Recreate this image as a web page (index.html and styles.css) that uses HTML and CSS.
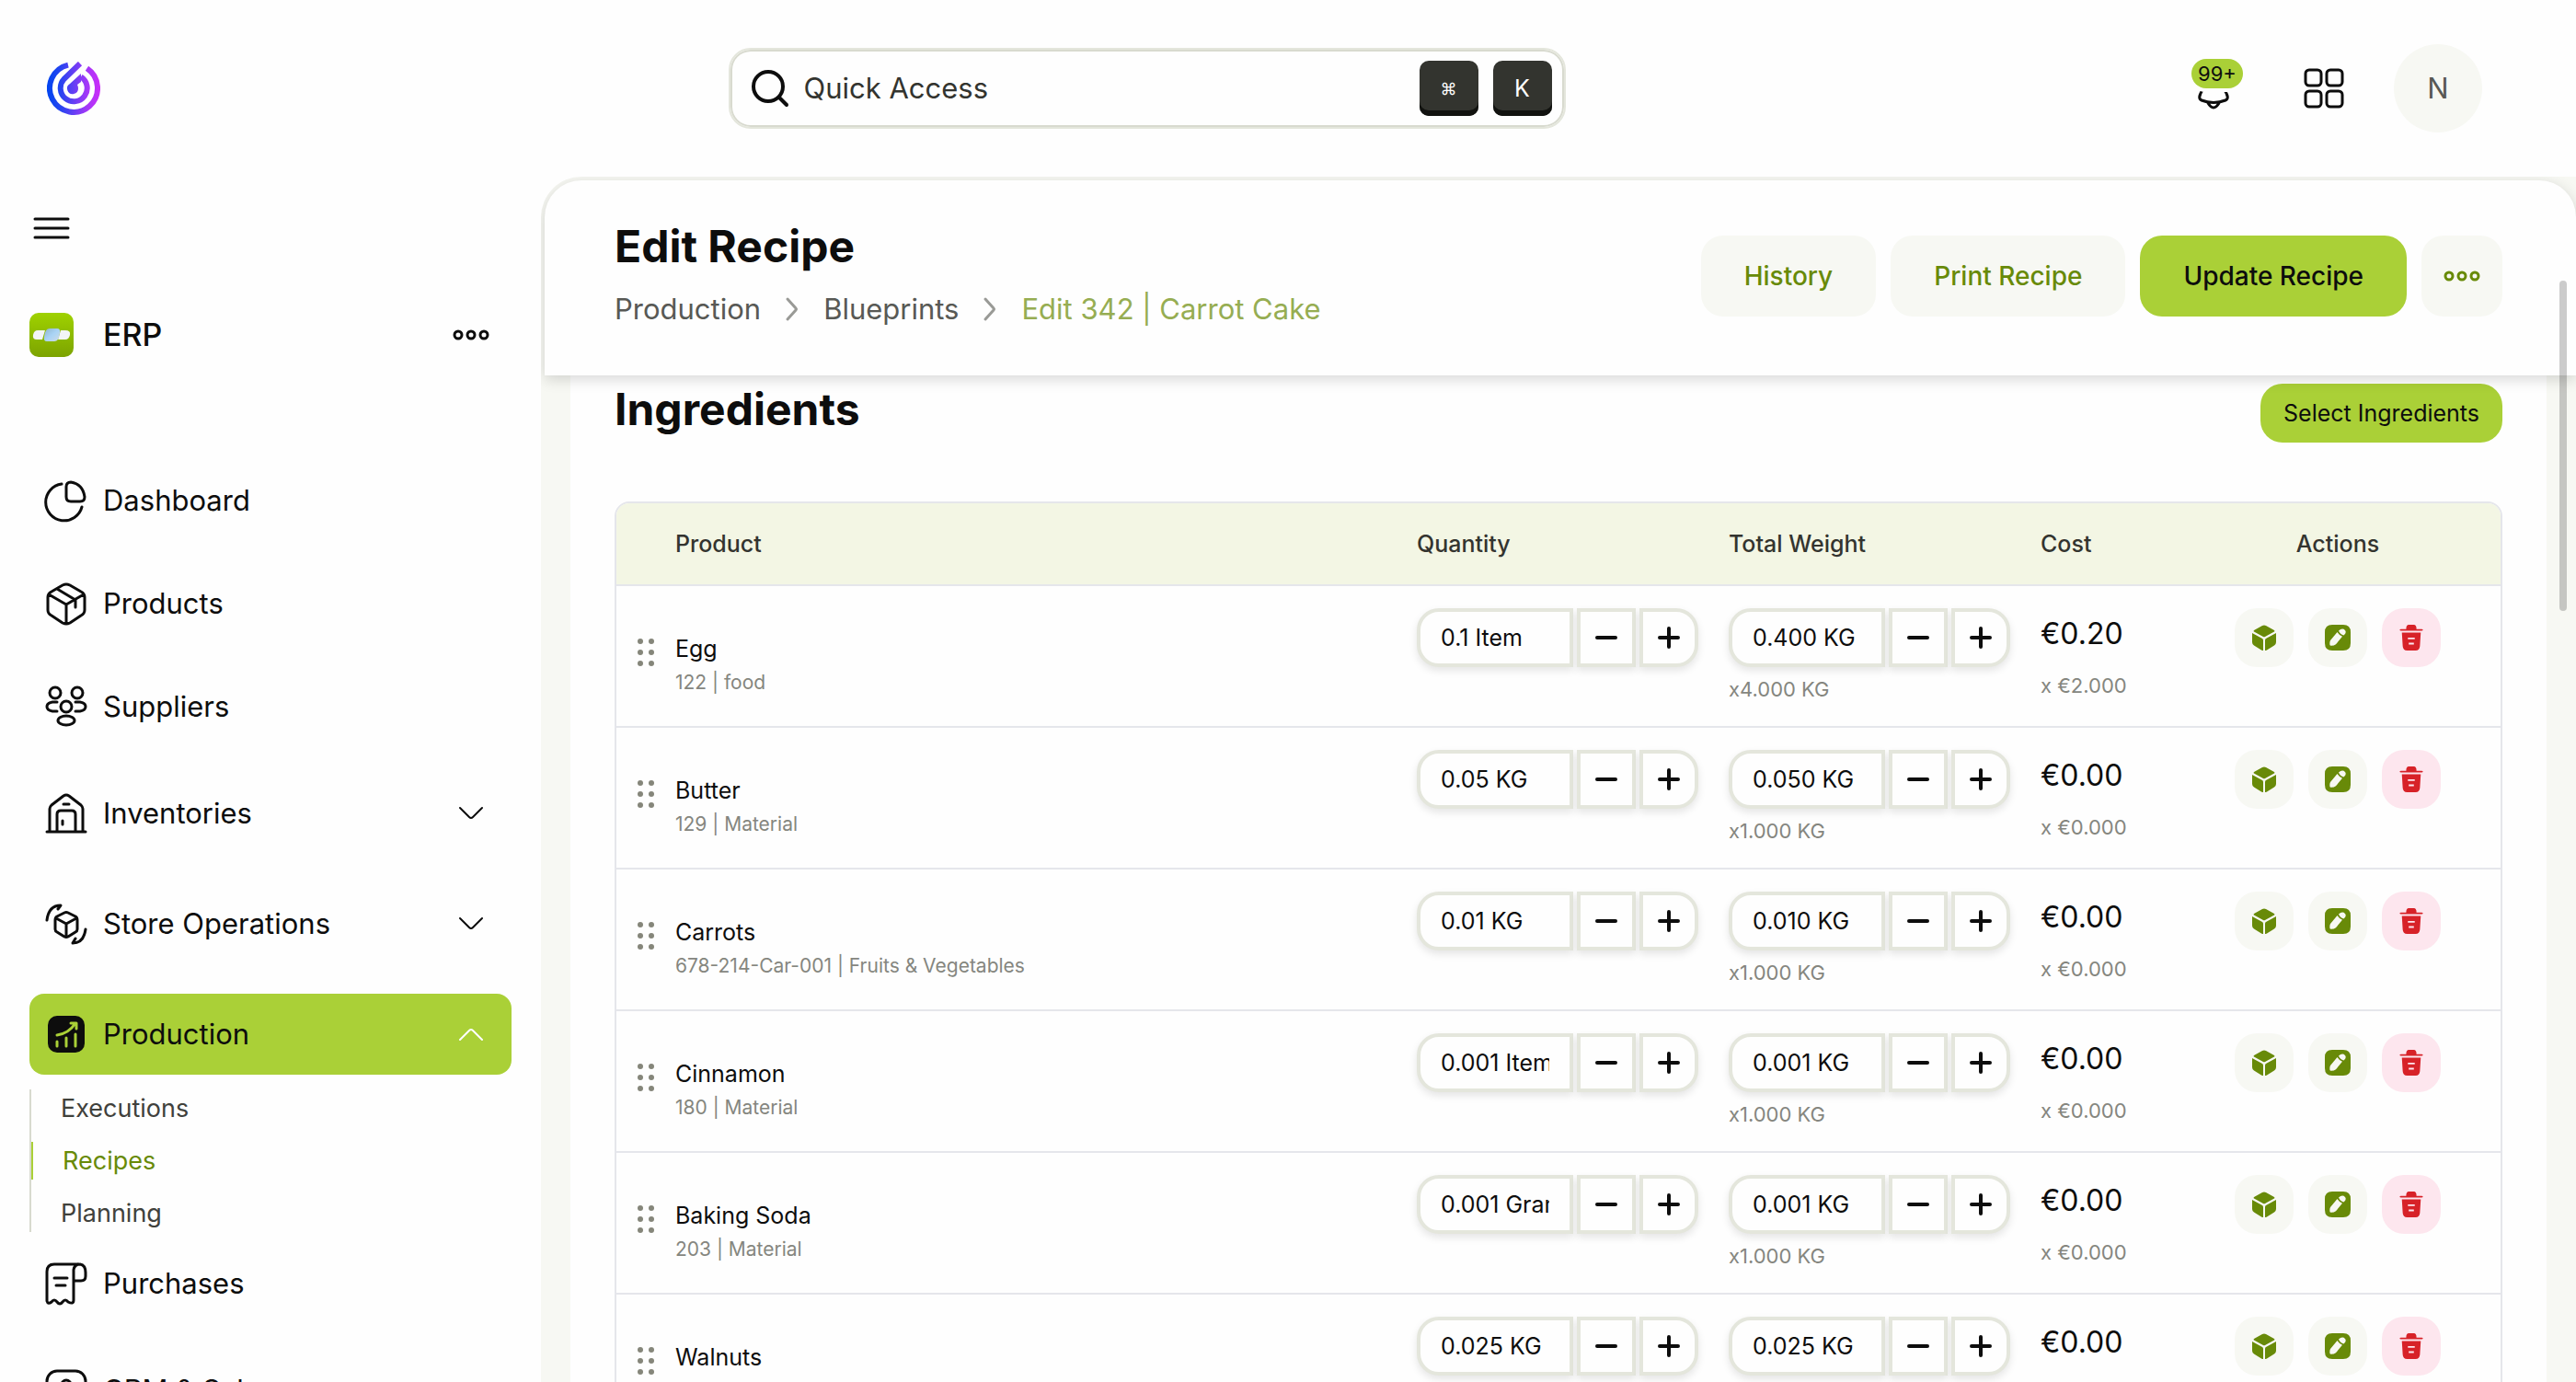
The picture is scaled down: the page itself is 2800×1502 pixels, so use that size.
FILE: index.html
```
<!DOCTYPE html>
<html lang="en">
<head>
    <meta charset="UTF-8">
    <meta name="viewport" content="width=device-width, initial-scale=1.0">
    <title>Edit Recipe</title>
    <link rel="stylesheet" href="styles.css">
</head>
<body>

    <!-- Shared icons -->
    <svg class="sprite" aria-hidden="true">
        <symbol id="i-chevron" viewBox="0 0 28 16"><path d="M2 2l10 10q2 2 4 0L26 2"/></symbol>
        <symbol id="i-crumb" viewBox="0 0 16 28"><path d="M3 3l9 10q1 1 0 2L3 25"/></symbol>
        <symbol id="i-more" viewBox="0 0 40 14"><circle cx="6" cy="7" r="4"/><circle cx="20" cy="7" r="4"/><circle cx="34" cy="7" r="4"/></symbol>
        <symbol id="i-drag" viewBox="0 0 18 30"><circle cx="3" cy="3" r="3"/><circle cx="15" cy="3" r="3"/><circle cx="3" cy="15" r="3"/><circle cx="15" cy="15" r="3"/><circle cx="3" cy="27" r="3"/><circle cx="15" cy="27" r="3"/></symbol>
        <symbol id="i-minus" viewBox="0 0 24 24"><path d="M2 12h20"/></symbol>
        <symbol id="i-plus" viewBox="0 0 24 24"><path d="M2 12h20M12 2v20"/></symbol>
        <symbol id="i-box" viewBox="0 0 28 28"><path d="M12 1q2-1 4 0l9 5q1 1 0 1.500L15 13q-1 .5-2 0L3 7.500Q2 7 3 6zM1 9l11 6q1 .5 1 2v11q-1 0-2-.5l-8-5Q1 21 1 19zM27 9l-11 6q-1 .5-1 2v11q1 0 2-.5l8-5q2-1.500 2-3.500z"/></symbol>
        <symbol id="i-edit" viewBox="0 0 28 28"><path fill-rule="evenodd" d="M8 0h12q8 0 8 8v12q0 8-8 8H8q-8 0-8-8V8q0-8 8-8zM13.500 8L6 17q-1 2-.5 5 .2 1 1.500.8 3 0 5-1.500l7-8.500q-3-1-5.500-4.800zM15 6.500q1.500 4 5.500 5 3.500-3 1.500-5.500-3-3-7 .5z"/></symbol>
        <symbol id="i-trash" viewBox="0 0 28 30"><path fill-rule="evenodd" d="M8 5q0-5 3-5h6q3 0 3 5h6q1.500 0 1.500 1T26 7H2Q.5 7 .5 6T2 5zM3 9h22l-1 16q-.3 5-5 5H9q-4.700 0-5-5zM10 15v2h8v-2zM11 21v2h6v-2z"/></symbol>
    </svg>

    <div class="app">

        <!-- Top bar -->
        <header class="topbar">
            <a href="#" class="logo" aria-label="Home">
                <svg viewBox="0 0 58 58">
                    <defs>
                        <linearGradient id="logoFill" x1="0" y1="0" x2="58" y2="0" gradientUnits="userSpaceOnUse">
                            <stop offset="0" stop-color="#0045f0"/>
                            <stop offset=".25" stop-color="#2544f0"/>
                            <stop offset=".75" stop-color="#a338f8"/>
                            <stop offset="1" stop-color="#cc2cf8"/>
                        </linearGradient>
                    </defs>
                    <g fill="none" stroke="url(#logoFill)" stroke-width="6">
                        <path d="M23 3.600A26 26 0 1 0 43.500 7.300"/>
                        <path d="M36 2L18.500 19A14.500 14.500 0 1 0 37 16.500"/>
                    </g>
                    <path fill="url(#logoFill)" d="M37 13l-12 11a6 6 0 1 0 9 5q0-2-1-4l4-3z"/>
                </svg>
            </a>
            <label class="search">
                <svg class="search-icon" viewBox="0 0 42 42"><circle cx="19" cy="19" r="16"/><path d="M31 31l8 8"/></svg>
                <input type="text" placeholder="Quick Access" aria-label="Quick Access">
                <kbd class="key key-cmd">⌘</kbd>
                <kbd class="key">K</kbd>
            </label>
            <div class="topbar-actions">
                <button class="bell" aria-label="Notifications">
                    <svg viewBox="0 0 44 48"><path d="M10 26q-6 9-1 11 13 5 26 0 5-2-1-11M16 40q6 10 12 0"/></svg>
                    <span class="badge">99+</span>
                </button>
                <button class="apps" aria-label="Apps">
                    <svg viewBox="0 0 44 44"><rect x="2" y="2" width="17" height="17" rx="4"/><rect x="25" y="2" width="17" height="17" rx="4"/><rect x="2" y="25" width="17" height="17" rx="4"/><rect x="25" y="25" width="17" height="17" rx="4"/></svg>
                </button>
                <button class="avatar">N</button>
            </div>
        </header>

        <div class="body">

            <!-- Sidebar -->
            <aside class="sidebar">
                <button class="menu-toggle" aria-label="Toggle menu">
                    <svg viewBox="0 0 40 24"><path d="M2 2h36M2 12h36M2 22h36"/></svg>
                </button>
                <div class="workspace">
                    <svg class="workspace-icon" viewBox="0 0 48 48">
                        <defs>
                            <linearGradient id="erpFill" x1="0" y1="0" x2="0" y2="1"><stop offset="0" stop-color="#9fd200"/><stop offset="1" stop-color="#7ca300"/></linearGradient>
                            <linearGradient id="erpBlue" x1="0" y1="0" x2="1" y2="1"><stop offset="0" stop-color="#8fb4cc"/><stop offset=".5" stop-color="#a9d3f5"/><stop offset="1" stop-color="#cfdbe6"/></linearGradient>
                        </defs>
                        <rect width="48" height="48" rx="10" fill="url(#erpFill)"/>
                        <path fill="#f3f5f6" d="M9 19h8l-3 10H8q-5 0-4-5 1-5 5-5zM34 19h5q6 0 5 5-1 5-5 5h-8z"/>
                        <path fill="url(#erpBlue)" d="M22 17h8q4 0 3 5-1 9-6 9h-8q-4 0-3-5 1-9 6-9z"/>
                    </svg>
                    <span class="workspace-name">ERP</span>
                    <button class="workspace-more" aria-label="More"><svg class="more"><use href="#i-more"/></svg></button>
                </div>
                <nav class="nav">
                    <a href="#" class="nav-item">
                        <svg class="nav-icon" viewBox="0 0 48 48"><path d="M19 6A20 20 0 1 0 41 31"/><path d="M24 9q0-5 5-5 13 2 15 16 0 5-5 5H29q-5 0-5-5z"/></svg>
                        <span>Dashboard</span>
                    </a>
                    <a href="#" class="nav-item">
                        <svg class="nav-icon" viewBox="0 0 48 48"><path d="M20 4q4-2 8 0l12 7q4 2 4 6v14q0 4-4 6l-12 8q-4 2-8 0L8 37q-4-2-4-6V17q0-4 4-6zM5 14l19 11 19-11M24 25v21M14 8l20 12v8"/></svg>
                        <span>Products</span>
                    </a>
                    <a href="#" class="nav-item">
                        <svg class="nav-icon" viewBox="0 0 48 48"><circle cx="12" cy="9" r="6"/><circle cx="36" cy="9" r="6"/><circle cx="24" cy="24" r="6"/><ellipse cx="24" cy="39" rx="9" ry="5"/><path d="M14 19H9q-6 1-6 5t6 5h5M34 19h5q6 1 6 5t-6 5h-5"/></svg>
                        <span>Suppliers</span>
                    </a>
                    <a href="#" class="nav-item nav-group">
                        <svg class="nav-icon" viewBox="0 0 48 48"><path d="M3 44h42M6 44V19q0-2 2-4L21 5q3-2 6 0l13 10q2 2 2 4v25M14 44V25q0-4 4-4h12q4 0 4 4v19M21 14h6M20 32v4"/></svg>
                        <span>Inventories</span>
                        <svg class="chevron"><use href="#i-chevron"/></svg>
                    </a>
                    <a href="#" class="nav-item nav-group">
                        <svg class="nav-icon" viewBox="0 0 48 48"><path d="M22 12q2-1 4 0l8 4q2 1 2 4v10q0 2-2 3l-8 5q-2 1-4 0l-8-5q-2-1-2-3V20q0-3 2-4zM13 18l11 6 11-6M24 24v14M3 20Q5 4 18 4l-3 4M45 30q-2 15-14 15l3-5"/></svg>
                        <span>Store Operations</span>
                        <svg class="chevron"><use href="#i-chevron"/></svg>
                    </a>
                    <a href="#" class="nav-item nav-group active">
                        <svg class="nav-icon" viewBox="0 0 48 48"><rect class="solid" x="4" y="4" width="40" height="40" rx="10"/><path class="cut" d="M14 25q13-2 20-13M29 12h6v6M14 32v5M24 28v9M34 24v13"/></svg>
                        <span>Production</span>
                        <svg class="chevron up"><use href="#i-chevron"/></svg>
                    </a>
                    <ul class="subnav">
                        <li><a href="#">Executions</a></li>
                        <li class="current"><a href="#">Recipes</a></li>
                        <li><a href="#">Planning</a></li>
                    </ul>
                    <a href="#" class="nav-item">
                        <svg class="nav-icon" viewBox="0 0 48 48"><path d="M37 3H11q-8 0-8 8v32q1 4 5 1 3-4 6 0 3 4 6 0 3-4 6 0 6 3 6-2V9q1-6 7-6 6 1 6 9v4q0 5-5 5h-7M11 18h14M13 26h10"/></svg>
                        <span>Purchases</span>
                    </a>
                    <a href="#" class="nav-item nav-group">
                        <svg class="nav-icon" viewBox="0 0 48 48"><rect x="3" y="3" width="42" height="42" rx="11"/><circle cx="24" cy="18" r="5"/></svg>
                        <span>CRM &amp; Sales</span>
                    </a>
                </nav>
            </aside>

            <!-- Page -->
            <main class="page">
                <div class="page-header">
                    <div class="page-title">
                        <h1>Edit Recipe</h1>
                        <nav class="breadcrumb" aria-label="Breadcrumb">
                            <a href="#">Production</a>
                            <svg><use href="#i-crumb"/></svg>
                            <a href="#">Blueprints</a>
                            <svg><use href="#i-crumb"/></svg>
                            <a href="#" class="here">Edit 342 | Carrot Cake</a>
                        </nav>
                    </div>
                    <div class="page-actions">
                        <button class="btn">History</button>
                        <button class="btn">Print Recipe</button>
                        <button class="btn btn-primary">Update Recipe</button>
                        <button class="btn btn-square" aria-label="More actions"><svg class="more"><use href="#i-more"/></svg></button>
                    </div>
                </div>

                <section class="card">
                    <div class="card-head">
                        <h2>Ingredients</h2>
                        <button class="btn-small">Select Ingredients</button>
                    </div>

                    <table class="ingredients">
                        <colgroup>
                            <col class="col-drag">
                            <col>
                            <col class="col-stepper">
                            <col class="col-stepper">
                            <col class="col-cost">
                            <col class="col-actions">
                        </colgroup>
                        <thead>
                            <tr>
                                <th></th>
                                <th>Product</th>
                                <th>Quantity</th>
                                <th>Total Weight</th>
                                <th>Cost</th>
                                <th class="center">Actions</th>
                            </tr>
                        </thead>
                        <tbody>
                            <tr>
                                <td class="drag"><svg><use href="#i-drag"/></svg></td>
                                <td class="product"><b>Egg</b><small>122 | food</small></td>
                                <td><div class="stepper"><input type="text" value="0.1 Item" aria-label="Quantity"><button aria-label="Less"><svg><use href="#i-minus"/></svg></button><button aria-label="More"><svg><use href="#i-plus"/></svg></button></div></td>
                                <td><div class="stepper"><input type="text" value="0.400 KG" aria-label="Total weight"><button aria-label="Less"><svg><use href="#i-minus"/></svg></button><button aria-label="More"><svg><use href="#i-plus"/></svg></button></div><small>x4.000 KG</small></td>
                                <td class="cost"><span>€0.20</span><small>x €2.000</small></td>
                                <td><div class="actions"><button aria-label="Stock"><svg><use href="#i-box"/></svg></button><button aria-label="Edit"><svg><use href="#i-edit"/></svg></button><button class="delete" aria-label="Delete"><svg><use href="#i-trash"/></svg></button></div></td>
                            </tr>
                            <tr>
                                <td class="drag"><svg><use href="#i-drag"/></svg></td>
                                <td class="product"><b>Butter</b><small>129 | Material</small></td>
                                <td><div class="stepper"><input type="text" value="0.05 KG" aria-label="Quantity"><button aria-label="Less"><svg><use href="#i-minus"/></svg></button><button aria-label="More"><svg><use href="#i-plus"/></svg></button></div></td>
                                <td><div class="stepper"><input type="text" value="0.050 KG" aria-label="Total weight"><button aria-label="Less"><svg><use href="#i-minus"/></svg></button><button aria-label="More"><svg><use href="#i-plus"/></svg></button></div><small>x1.000 KG</small></td>
                                <td class="cost"><span>€0.00</span><small>x €0.000</small></td>
                                <td><div class="actions"><button aria-label="Stock"><svg><use href="#i-box"/></svg></button><button aria-label="Edit"><svg><use href="#i-edit"/></svg></button><button class="delete" aria-label="Delete"><svg><use href="#i-trash"/></svg></button></div></td>
                            </tr>
                            <tr>
                                <td class="drag"><svg><use href="#i-drag"/></svg></td>
                                <td class="product"><b>Carrots</b><small>678-214-Car-001 | Fruits &amp; Vegetables</small></td>
                                <td><div class="stepper"><input type="text" value="0.01 KG" aria-label="Quantity"><button aria-label="Less"><svg><use href="#i-minus"/></svg></button><button aria-label="More"><svg><use href="#i-plus"/></svg></button></div></td>
                                <td><div class="stepper"><input type="text" value="0.010 KG" aria-label="Total weight"><button aria-label="Less"><svg><use href="#i-minus"/></svg></button><button aria-label="More"><svg><use href="#i-plus"/></svg></button></div><small>x1.000 KG</small></td>
                                <td class="cost"><span>€0.00</span><small>x €0.000</small></td>
                                <td><div class="actions"><button aria-label="Stock"><svg><use href="#i-box"/></svg></button><button aria-label="Edit"><svg><use href="#i-edit"/></svg></button><button class="delete" aria-label="Delete"><svg><use href="#i-trash"/></svg></button></div></td>
                            </tr>
                            <tr>
                                <td class="drag"><svg><use href="#i-drag"/></svg></td>
                                <td class="product"><b>Cinnamon</b><small>180 | Material</small></td>
                                <td><div class="stepper"><input type="text" value="0.001 Item" aria-label="Quantity"><button aria-label="Less"><svg><use href="#i-minus"/></svg></button><button aria-label="More"><svg><use href="#i-plus"/></svg></button></div></td>
                                <td><div class="stepper"><input type="text" value="0.001 KG" aria-label="Total weight"><button aria-label="Less"><svg><use href="#i-minus"/></svg></button><button aria-label="More"><svg><use href="#i-plus"/></svg></button></div><small>x1.000 KG</small></td>
                                <td class="cost"><span>€0.00</span><small>x €0.000</small></td>
                                <td><div class="actions"><button aria-label="Stock"><svg><use href="#i-box"/></svg></button><button aria-label="Edit"><svg><use href="#i-edit"/></svg></button><button class="delete" aria-label="Delete"><svg><use href="#i-trash"/></svg></button></div></td>
                            </tr>
                            <tr>
                                <td class="drag"><svg><use href="#i-drag"/></svg></td>
                                <td class="product"><b>Baking Soda</b><small>203 | Material</small></td>
                                <td><div class="stepper"><input type="text" value="0.001 Gram" aria-label="Quantity"><button aria-label="Less"><svg><use href="#i-minus"/></svg></button><button aria-label="More"><svg><use href="#i-plus"/></svg></button></div></td>
                                <td><div class="stepper"><input type="text" value="0.001 KG" aria-label="Total weight"><button aria-label="Less"><svg><use href="#i-minus"/></svg></button><button aria-label="More"><svg><use href="#i-plus"/></svg></button></div><small>x1.000 KG</small></td>
                                <td class="cost"><span>€0.00</span><small>x €0.000</small></td>
                                <td><div class="actions"><button aria-label="Stock"><svg><use href="#i-box"/></svg></button><button aria-label="Edit"><svg><use href="#i-edit"/></svg></button><button class="delete" aria-label="Delete"><svg><use href="#i-trash"/></svg></button></div></td>
                            </tr>
                            <tr>
                                <td class="drag"><svg><use href="#i-drag"/></svg></td>
                                <td class="product"><b>Walnuts</b></td>
                                <td><div class="stepper"><input type="text" value="0.025 KG" aria-label="Quantity"><button aria-label="Less"><svg><use href="#i-minus"/></svg></button><button aria-label="More"><svg><use href="#i-plus"/></svg></button></div></td>
                                <td><div class="stepper"><input type="text" value="0.025 KG" aria-label="Total weight"><button aria-label="Less"><svg><use href="#i-minus"/></svg></button><button aria-label="More"><svg><use href="#i-plus"/></svg></button></div></td>
                                <td class="cost"><span>€0.00</span></td>
                                <td><div class="actions"><button aria-label="Stock"><svg><use href="#i-box"/></svg></button><button aria-label="Edit"><svg><use href="#i-edit"/></svg></button><button class="delete" aria-label="Delete"><svg><use href="#i-trash"/></svg></button></div></td>
                            </tr>
                        </tbody>
                    </table>
                </section>

                <div class="scroll-thumb"></div>
            </main>
        </div>
    </div>

</body>
</html>
```
FILE: styles.css
```
* {
    margin: 0;
    padding: 0;
    box-sizing: border-box;
}

body {
    font-family: Inter, "Liberation Sans", sans-serif;
    font-size: 31px;
    line-height: 40px;
    color: #0d0d0d;
    background: #fefefe;
    overflow: hidden;
}

a {
    color: inherit;
    text-decoration: none;
}

button {
    display: flex;
    align-items: center;
    justify-content: center;
    font: inherit;
    color: inherit;
    background: none;
    border: none;
    cursor: pointer;
}

svg {
    display: block;
    flex: none;
    fill: none;
    stroke: currentColor;
    stroke-width: 3;
    stroke-linecap: round;
    stroke-linejoin: round;
}

.sprite {
    width: 0;
    height: 0;
    position: absolute;
}

.app {
    height: 100vh;
    display: flex;
    flex-direction: column;
}

/* Top bar */
.topbar {
    flex: none;
    height: 192px;
    padding: 0 102px 0 51px;
    display: flex;
    align-items: center;
    justify-content: space-between;
}

.logo svg {
    width: 58px;
    height: 58px;
    stroke: none;
    stroke-linecap: butt;
}

.search {
    width: 910px;
    height: 88px;
    padding: 0 13px 0 22px;
    display: flex;
    align-items: center;
    gap: 16px;
    border: 2px solid #e4e6dc;
    border-radius: 24px;
    box-shadow: inset 0 0 0 2px #d8dacf;
}

.search-icon {
    width: 42px;
    height: 42px;
    stroke-width: 4;
}

.search input {
    flex: 1;
    min-width: 0;
    font: inherit;
    border: none;
    outline: none;
    background: none;
}

.search input::placeholder {
    color: #33342f;
    opacity: 1;
}

.key {
    width: 64px;
    height: 60px;
    display: flex;
    align-items: center;
    justify-content: center;
    font: 25px Inter, sans-serif;
    color: #fefefe;
    background: #33342f;
    border-radius: 10px;
    box-shadow: inset 0 -6px 0 #11120f;
}

.key-cmd {
    font-size: 18px;
}

.topbar-actions {
    display: flex;
    align-items: center;
    justify-content: flex-end;
}

.bell {
    position: relative;
    width: 44px;
    height: 48px;
    margin-right: 76px;
}

.bell svg {
    width: 44px;
    height: 48px;
}

.badge {
    position: absolute;
    top: -8px;
    left: -2px;
    width: 56px;
    height: 32px;
    font-size: 22px;
    line-height: 32px;
    text-align: center;
    background: #aad037;
    border-radius: 16px;
    box-shadow: 0 0 0 4px #fefefe;
}

.apps {
    margin-right: 54px;
}

.apps svg {
    width: 44px;
    height: 44px;
}

.avatar {
    width: 96px;
    height: 96px;
    color: #585955;
    background: #f7f8f3;
    border-radius: 50%;
}

.body {
    flex: 1;
    min-height: 0;
    display: flex;
}

/* Sidebar */
.sidebar {
    width: 588px;
    flex: none;
    padding: 36px 32px 0;
    overflow: hidden;
}

.menu-toggle {
    width: 48px;
    height: 40px;
}

.menu-toggle svg {
    width: 40px;
    height: 24px;
}

.workspace {
    display: flex;
    align-items: center;
    height: 48px;
    margin: 72px 0 116px;
    padding-right: 24px;
}

.workspace-icon {
    width: 48px;
    height: 48px;
    stroke: none;
}

.workspace-name {
    flex: 1;
    margin-left: 32px;
    font-size: 34px;
    font-weight: 500;
}

.more {
    width: 40px;
    height: 14px;
}

.nav {
    display: flex;
    flex-direction: column;
    gap: 32px;
}

.nav-item {
    flex: none;
    display: flex;
    align-items: center;
    gap: 16px;
    height: 80px;
    padding: 0 30px 0 16px;
    border-radius: 16px;
}

.nav-item span {
    flex: 1;
}

.nav-group {
    height: 88px;
}

.nav-item.active {
    background: #aad037;
}

.nav-icon {
    width: 48px;
    height: 48px;
}

.nav-icon .solid {
    fill: currentColor;
    stroke: none;
}

.nav-icon .cut {
    stroke: #aad037;
}

.chevron {
    width: 28px;
    height: 16px;
    stroke-width: 2;
}

.chevron.up {
    color: #fefefe;
    transform: rotate(180deg);
}

.subnav {
    display: flex;
    flex-direction: column;
    gap: 16px;
    margin: -16px 0;
    list-style: none;
    font-size: 27px;
    line-height: 41px;
    color: #40413c;
    border-left: 2px solid #d8dacf;
}

.subnav li {
    padding-left: 32px;
}

.subnav .current {
    color: #688a08;
    border-left: 2px solid #aad037;
}

/* Page */
.page {
    position: relative;
    flex: 1;
    min-width: 0;
    padding: 4px 0 0 4px;
    background: #f7f8f3;
    border-top-left-radius: 44px;
    overflow: hidden;
}

.page-header {
    position: relative;
    z-index: 1;
    display: flex;
    align-items: center;
    justify-content: space-between;
    height: 212px;
    padding: 0 80px 4px 76px;
    background: #fefefe;
    border-radius: 40px 40px 0 0;
    box-shadow: 0 4px 16px rgba(0, 0, 0, 0.16);
}

.page-title {
    padding-bottom: 4px;
}

h1, h2 {
    font-size: 48px;
    line-height: 56px;
    font-weight: 700;
}

.breadcrumb {
    display: flex;
    align-items: center;
    gap: 26px;
    margin-top: 20px;
    color: #585955;
}

.breadcrumb svg {
    width: 16px;
    height: 28px;
    color: #999a96;
}

.breadcrumb .here {
    color: #96ad52;
}

.page-actions {
    display: flex;
    gap: 16px;
}

.btn {
    height: 88px;
    padding: 0 47px;
    font-size: 28px;
    font-weight: 500;
    white-space: nowrap;
    color: #688a08;
    background: #f7f8f3;
    border-radius: 24px;
}

.btn-primary {
    color: #0d0d0d;
    background: #aad037;
}

.btn-square {
    width: 88px;
    padding: 0;
}

.card {
    margin: 0 32px 0 28px;
    padding: 9px 48px 0;
    background: #fefefe;
}

.card-head {
    display: flex;
    align-items: flex-start;
    justify-content: space-between;
    margin-bottom: 64px;
}

.btn-small {
    height: 64px;
    padding: 0 25px;
    font-size: 25px;
    background: #aad037;
    border-radius: 24px;
}

/* Ingredients table */
.ingredients {
    width: 100%;
    table-layout: fixed;
    border-collapse: separate;
    border-spacing: 0;
    border: 2px solid #e5e6eb;
    border-radius: 16px;
    overflow: hidden;
}

.col-drag {
    width: 64px;
}

.col-stepper {
    width: 339px;
}

.col-cost {
    width: 146px;
}

.col-actions {
    width: 354px;
}

th {
    height: 90px;
    font-size: 25px;
    font-weight: 500;
    text-align: left;
    color: #33342f;
    background: #f3f6e4;
    border-bottom: 2px solid #e5e6eb;
}

th.center {
    text-align: center;
}

td {
    height: 154px;
    padding-top: 24px;
    vertical-align: top;
    white-space: nowrap;
    border-bottom: 2px solid #e5e6eb;
}

small {
    display: block;
    font-size: 22px;
    line-height: 32px;
    color: #85867f;
}

.drag svg {
    width: 18px;
    height: 30px;
    margin: 33px 0 0 23px;
    fill: #85867a;
    stroke: none;
}

.product {
    padding-top: 50px;
}

.product b {
    display: block;
    font-size: 25px;
    line-height: 36px;
    font-weight: 400;
}

.product small {
    margin-top: 3px;
    font-size: 21px;
}

.stepper {
    display: flex;
    gap: 4px;
    margin-bottom: 8px;
}

.stepper input,
.stepper button {
    width: 64px;
    height: 64px;
    font: 25px Inter, sans-serif;
    color: #0d0d0d;
    background: #fefefe;
    border: 4px solid #e4e6dc;
    box-shadow: 0 4px 8px rgba(0, 0, 0, 0.1);
}

.stepper input {
    width: 170px;
    padding: 0 22px;
    border-radius: 24px 0 0 24px;
}

.stepper button:last-child {
    border-radius: 0 24px 24px 0;
}

.stepper svg {
    width: 24px;
    height: 24px;
    stroke-width: 4;
}

.cost span {
    display: block;
    margin: 8px 0 20px;
    font-size: 32px;
}

.actions {
    display: flex;
    justify-content: center;
    gap: 16px;
}

.actions button {
    width: 64px;
    height: 64px;
    color: #688a08;
    background: #f7f8f3;
    border-radius: 24px;
}

.actions svg {
    width: 28px;
    height: 28px;
    fill: currentColor;
    stroke: none;
}

.actions .delete {
    color: #d72228;
    background: #fde6ee;
}

.scroll-thumb {
    position: absolute;
    z-index: 2;
    top: 113px;
    right: 10px;
    width: 8px;
    height: 359px;
    background: rgba(0, 0, 0, 0.2);
    border-radius: 4px;
}
```
